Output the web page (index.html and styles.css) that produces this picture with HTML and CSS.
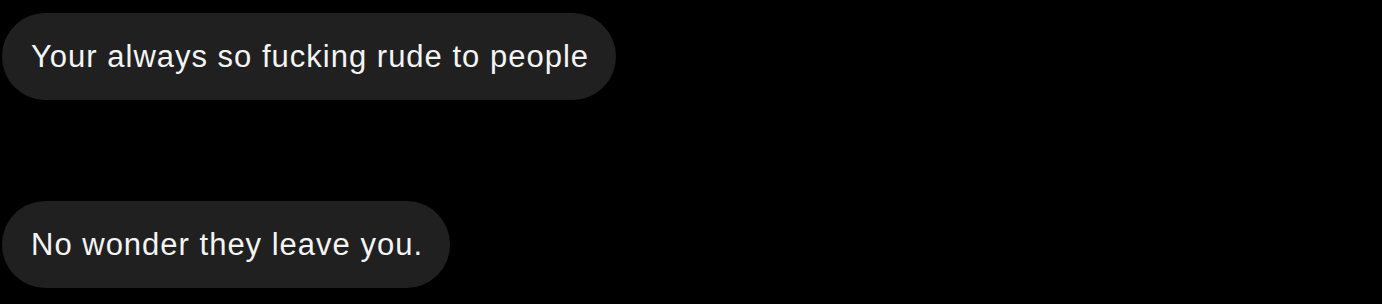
FILE: index.html
```html
<!doctype html>
<html lang="en">
<head>
  <meta charset="utf-8">
  <meta name="viewport" content="width=device-width,initial-scale=1">
  <title>Messages</title>
  <link rel="stylesheet" href="styles.css">
</head>
<body>
  <div class="thread">
    <div class="bubble">Your always so fucking rude to people</div>
    <div class="bubble">No wonder they leave you.</div>
  </div>
</body>
</html>
```

FILE: styles.css
```css
:root{ --bg:#000000; --bubble:#202020; --text:#f4f4f4; }
*{box-sizing:border-box;}
html, body{ background:var(--bg); }
body{ margin:0; padding:0; color:var(--text); font-family:"Liberation Sans", Arial, sans-serif; min-height:100vh; }
.thread{ display:flex; flex-direction:column; align-items:flex-start; gap:101px; padding:13px 0 0 2px; }
.bubble{ background:var(--bubble); height:87px; padding:0 27px 0 29px; border-radius:44px; display:flex; align-items:center; font-size:31px; letter-spacing:1px; line-height:1; white-space:nowrap; }
```
